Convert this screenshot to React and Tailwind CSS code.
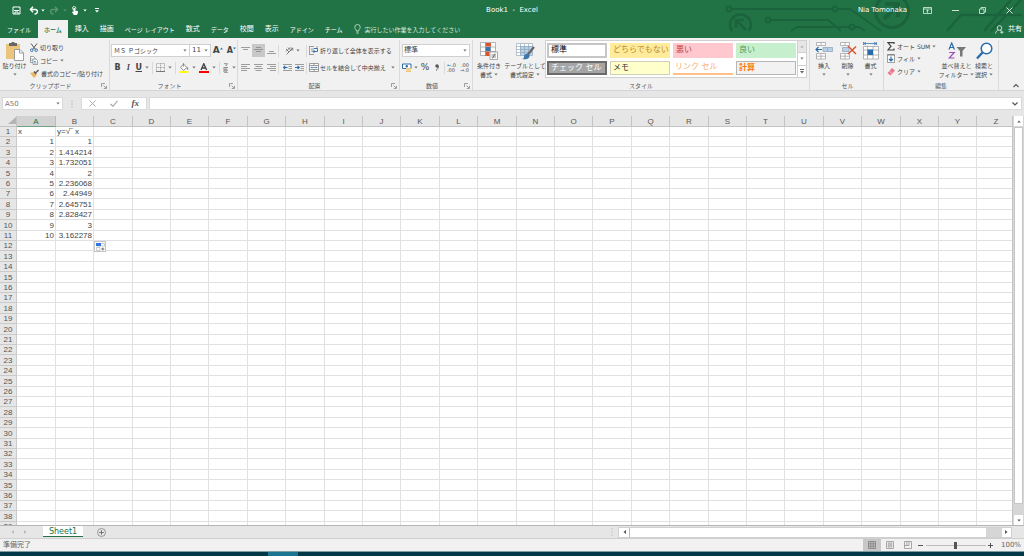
import React from 'react';

const JP = "font-['DejaVu_Sans','Noto_Sans_CJK_JP',sans-serif]";

function Caret({ className = 'fill-[#777]' }) {
  return (
    <svg viewBox="0 0 4 3" className={'h-[3px] w-1 shrink-0 ' + className} aria-hidden="true">
      <path d="M0.3 0.4h3.4L2 2.4z" />
    </svg>
  );
}

function Sep() {
  return <span className="h-3 w-px shrink-0 bg-[#dadada]" />;
}

function Svg({ w, h, className = '', children }) {
  return (
    <svg width={w} height={h} viewBox={`0 0 ${w} ${h}`} className={'shrink-0 ' + className} fill="none" aria-hidden="true">
      {children}
    </svg>
  );
}

function IconButton({ label, className = '', children }) {
  return (
    <button type="button" aria-label={label} className={'flex shrink-0 items-center justify-center ' + className}>
      {children}
    </button>
  );
}

function Group({ title, launcher, className = '', children }) {
  return (
    <section aria-label={title} className={'mt-0.5 flex shrink-0 flex-col border-r border-[#dadada] ' + className}>
      <div className="flex h-[42px] min-w-0">{children}</div>
      <div className="flex h-2 items-center text-[6px] leading-[8px] text-[#555]">
        <span className="flex-1 text-center">{title}</span>
        {launcher && (
          <IconButton label={title + 'の設定'} className="mr-0.5">
            <Svg w={6} h={6}>
              <path d="M0.5 4V0.5H4M2.5 2.5l2.5 2.5M5.5 2.8v2.7H2.8" stroke="#888" strokeWidth="0.8" />
            </Svg>
          </IconButton>
        )}
      </div>
    </section>
  );
}

function BigButton({ icon, lines, caret, className = '' }) {
  return (
    <button type="button" className={'flex shrink-0 flex-col items-center justify-start pt-px text-[6px] leading-[9px] ' + className}>
      <span className="flex h-5 items-center justify-center">{icon}</span>
      {lines.map((line, i) => (
        <span key={line} className="flex items-center gap-0.5 whitespace-nowrap">
          {line}
          {caret === 'inline' && i === lines.length - 1 && <Caret />}
        </span>
      ))}
      {caret === 'below' && <span className="flex h-[9px] items-center"><Caret /></span>}
    </button>
  );
}

function Header() {
  return (
    <header className="relative h-[38px] shrink-0 overflow-hidden bg-[#217346] text-white">
      <svg className="absolute top-0 right-0" width="304" height="38" viewBox="0 0 304 38" fill="none" stroke="#1b633c" strokeWidth="2" aria-hidden="true">
        <circle cx="9" cy="9" r="2.4" />
        <path d="M12 9h100M118 9h12l31 22M51 20h57l13 11M71 31l6-4h52M135 27h4l6 4" />
        <circle cx="115" cy="9" r="2.4" />
        <circle cx="48" cy="20" r="2.4" />
        <circle cx="132" cy="27" r="2.4" />
        <path d="M12 31a10.5 10.5 0 1 1 17 0" strokeWidth="2.6" />
        <path d="M26 30L17 21M16 28v-8h8" strokeWidth="2.6" />
        <circle cx="172" cy="11" r="16.5" strokeWidth="3" />
        <path d="M164 19l13-13M165 4h13v13" strokeWidth="4" />
        <path d="M227 31l14-16h61M264 31l27-31M271 31L301 0" strokeWidth="2.4" />
      </svg>

      <div className="relative flex h-5 items-center">
        <div className="flex w-1/3 items-center pl-3">
          <IconButton label="上書き保存">
            <Svg w={9} h={9}>
              <path d="M1 1h7v7H1z" stroke="#fff" />
              <path d="M2 4.5h5M3 8V6h3v2" stroke="#fff" />
            </Svg>
          </IconButton>
          <IconButton label="元に戻す" className="ml-2 gap-0.5">
            <Svg w={10} h={9}>
              <path d="M4 0.8L1.4 3.5 4 6.2M1.5 3.5h4.7C9.5 3.5 9 8 5.5 8" stroke="#fff" strokeWidth="1.4" />
            </Svg>
            <Caret className="fill-white" />
          </IconButton>
          <IconButton label="やり直し" className="ml-1 gap-1 opacity-25">
            <Svg w={10} h={9}>
              <path d="M6 0.8l2.6 2.7L6 6.2M8.5 3.5H3.8C0.5 3.5 1 8 4.5 8" stroke="#fff" strokeWidth="1.4" />
            </Svg>
            <Caret className="fill-white" />
          </IconButton>
          <IconButton label="タッチ/マウス モードの切り替え" className="ml-1 gap-1">
            <Svg w={8} h={9}>
              <circle cx="3.2" cy="2.2" r="1.7" stroke="#fff" strokeWidth="0.8" />
              <path d="M2.5 2h1.4v2.5l3 .6v2L6 9H2.8L1 6l.6-.6.9.6z" fill="#fff" />
            </Svg>
            <Caret className="fill-white" />
          </IconButton>
          <IconButton label="クイック アクセス ツール バーのユーザー設定" className="ml-2">
            <Svg w={4} h={5}>
              <path d="M0 0.5h4" stroke="#fff" />
              <path d="M0 2.2h4L2 4.5z" fill="#fff" />
            </Svg>
          </IconButton>
        </div>
        <h1 className="flex-1 text-center text-[7px] leading-[10px] whitespace-pre">Book1  -  Excel</h1>
        <div className="flex w-1/3 items-center justify-end pr-[11px]">
          <span className="text-[7px] leading-[10px]">Nia Tomonaka</span>
          <IconButton label="リボンの表示オプション" className="ml-4">
            <Svg w={9} h={7}>
              <path d="M0.5 0.5h8v6h-8zM0.5 2h8M4.5 5.8V3M3.2 4.3l1.3-1.3 1.3 1.3" stroke="#fff" strokeWidth="0.7" />
            </Svg>
          </IconButton>
          <IconButton label="最小化" className="ml-5">
            <Svg w={7} h={7}><path d="M0 3.5h7" stroke="#fff" strokeWidth="0.8" /></Svg>
          </IconButton>
          <IconButton label="元に戻す (縮小)" className="ml-5">
            <Svg w={7} h={7}><path d="M0.5 2h4.5v4.5H0.5zM2 2V0.5h4.5V5H5" stroke="#fff" strokeWidth="0.7" /></Svg>
          </IconButton>
          <IconButton label="閉じる" className="ml-5">
            <Svg w={7} h={7}><path d="M0.5 0.5l6 6M6.5 0.5l-6 6" stroke="#fff" strokeWidth="0.8" /></Svg>
          </IconButton>
        </div>
      </div>

      <nav className="relative flex h-[18px] items-center gap-[11px] pr-0.5 pl-[7px] text-[6px]">
        <button type="button" className="-mr-1 whitespace-nowrap">ファイル</button>
        <button type="button" className="-mr-1 h-[18px] bg-[#f1f1f1] px-1.5 font-medium text-[#217346]">ホーム</button>
        <button type="button" className="text-[7px]">挿入</button>
        <button type="button" className="text-[7px]">描画</button>
        <button type="button" className="whitespace-nowrap">ページ レイアウト</button>
        <button type="button" className="text-[7px]">数式</button>
        <button type="button">データ</button>
        <button type="button" className="text-[7px]">校閲</button>
        <button type="button" className="text-[7px]">表示</button>
        <button type="button">アドイン</button>
        <button type="button">チーム</button>
        <button type="button" className="flex items-center gap-1 whitespace-nowrap text-[#d5e6dc]">
          <Svg w={7} h={10}>
            <path d="M2.3 6.8C2.3 5.6 0.8 5 0.8 3.2a2.7 2.7 0 0 1 5.4 0c0 1.8-1.5 2.4-1.5 3.6zM2.3 8h2.4M2.6 9.3h1.8" stroke="#e6f0ea" strokeWidth="0.7" />
          </Svg>
          実行したい作業を入力してください
        </button>
        <button type="button" className="ml-auto flex items-center gap-1 text-[7px] whitespace-nowrap">
          <Svg w={9} h={9}>
            <circle cx="4.5" cy="3" r="2.3" stroke="#fff" strokeWidth="0.7" />
            <path d="M0.6 8.6C0.8 6.5 2 5.4 3.5 5M5 5l1.2.8M6.8 5.5v3.4M5.1 7.2h3.5" stroke="#fff" strokeWidth="0.7" />
          </Svg>
          共有
        </button>
      </nav>
    </header>
  );
}

function ClipboardGroup() {
  return (
    <Group title="クリップボード" launcher className="w-[110px]">
      <BigButton
        className="w-[29px]"
        lines={['貼り付け']}
        caret="below"
        icon={
          <Svg w={18} h={19}>
            <path d="M0 2h14v15H0z" fill="#ecc57c" />
            <path d="M3 1h2.5a1.5 1.5 0 0 1 3 0H11v3H3z" fill="#666" />
            <path d="M8.5 7.5h5.5l3.5 3.5v7.5h-9z" fill="#fff" stroke="#888" strokeWidth="0.8" />
            <path d="M13.5 7.5V11h4" stroke="#888" strokeWidth="0.8" />
          </Svg>
        }
      />
      <div className="flex flex-col pt-px pl-px text-[6px] leading-[9px]">
        <button type="button" className="flex h-[13px] items-center gap-0.5">
          <Svg w={8} h={9}>
            <path d="M1 0.5l4.5 6M7 0.5l-4.5 6" stroke="#555" />
            <circle cx="1.8" cy="7.2" r="1.3" stroke="#3a76b0" />
            <circle cx="6.2" cy="7.2" r="1.3" stroke="#3a76b0" />
          </Svg>
          切り取り
        </button>
        <button type="button" className="flex h-[13px] items-center gap-0.5">
          <Svg w={8} h={9}>
            <path d="M0.5 0.5h3l1.5 1.5v4.5H0.5z" fill="#fff" stroke="#777" strokeWidth="0.7" />
            <path d="M3 3h3l1.6 1.6v4H3z" fill="#fff" stroke="#777" strokeWidth="0.7" />
            <path d="M4 5.5h2M4 7h2.6M1.4 3h1.2M1.4 4.5h1.2" stroke="#3a76b0" strokeWidth="0.7" />
          </Svg>
          コピー<Caret />
        </button>
        <button type="button" className="flex h-[13px] items-center gap-0.5 whitespace-nowrap">
          <Svg w={9} h={9}>
            <path d="M0 4l4-1 3 3-3 3z" fill="#e9b867" />
            <path d="M4 2.5L6.2 5M6 3.5L8.6 1" stroke="#555" strokeWidth="1.4" />
          </Svg>
          書式のコピー/貼り付け
        </button>
      </div>
    </Group>
  );
}

function FontGroup() {
  return (
    <Group title="フォント" launcher className="w-32">
      <div className="flex w-full flex-col px-px pt-1">
        <div className="flex items-center">
          <label className="flex h-[13px] w-20 items-center border border-[#d0d0d0] bg-white pr-0.5">
            <select aria-label="フォント" className="w-full appearance-none pl-0.5 text-[6px] leading-[9px]"><option>ＭＳ Ｐゴシック</option></select>
            <Caret />
          </label>
          <label className="flex h-[13px] w-[21px] items-center border border-l-0 border-[#d0d0d0] bg-white pr-0.5">
            <select aria-label="フォント サイズ" className="w-full appearance-none pl-0.5 text-[7px] leading-[9px]"><option>11</option></select>
            <Caret />
          </label>
          <IconButton label="フォント サイズの拡大" className="ml-0.5 text-[9px] leading-[11px] font-bold">
            A<Svg w={3} h={8}><path d="M0 2.5L1.5 0.5 3 2.5z" fill="#3a76b0" /></Svg>
          </IconButton>
          <IconButton label="フォント サイズの縮小" className="ml-1 text-[8px] leading-[11px] font-bold">
            A<Svg w={3} h={8}><path d="M0 0.5h3L1.5 2.5z" fill="#3a76b0" /></Svg>
          </IconButton>
        </div>
        <div className="mt-1 flex h-[13px] items-center gap-[3px] pl-[3px] text-[8px] leading-[11px]">
          <button type="button" className="w-2 font-bold">B</button>
          <button type="button" className="w-2.5 font-['Liberation_Serif',serif] font-bold italic">I</button>
          <button type="button" className="flex items-center gap-[3px] font-bold underline">U<Caret /></button>
          <Sep />
          <IconButton label="罫線" className="gap-[3px]">
            <Svg w={9} h={9}><path d="M0.5 0.5h8v8h-8zM4.5 0.5v8M0.5 4.5h8" stroke="#888" strokeWidth="0.7" strokeDasharray="1 0.6" /><path d="M0 8.5h9" stroke="#777" /></Svg>
            <Caret />
          </IconButton>
          <Sep />
          <IconButton label="塗りつぶしの色" className="gap-[3px]">
            <Svg w={10} h={10}>
              <path d="M4.5 1L8 4.5 4.5 7.3 1.5 4.5z" fill="#fff" stroke="#777" strokeWidth="0.8" />
              <path d="M4.5 0v3.5" stroke="#777" strokeWidth="0.7" />
              <path d="M8 4c1.3 1 1.5 2 1 3-.8-.4-1-1.7-1-3z" fill="#3a76b0" />
              <path d="M0 8h9.5v2H0z" fill="#ffff00" />
            </Svg>
            <Caret />
          </IconButton>
          <IconButton label="フォントの色" className="gap-[3px]">
            <Svg w={10} h={10}><path d="M2 7L4.8 0.8 7.6 7M3 5h3.6" stroke="#444" strokeWidth="1.4" /><path d="M0 8h10v2H0z" fill="#ff0000" /></Svg>
            <Caret />
          </IconButton>
          <Sep />
          <IconButton label="ふりがなの表示/非表示" className="gap-[3px]">
            <Svg w={6} h={10}><path d="M1 0.7h3.5L3.2 2.5M3.200 2v1M0.500 4.500h4.500M3 4.500V9M1 7h4M1 9.300h4M1 5v4" stroke="#777" strokeWidth="0.8" /></Svg>
            <Caret />
          </IconButton>
        </div>
      </div>
    </Group>
  );
}

const linePaths = {
  top: 'M0 1.5h9M2 3.5h5',
  middle: 'M0 3.5h9M2 1.5h5M2 5.5h5',
  bottom: 'M0 7.5h9M2 5.5h5',
  left: 'M0 1.5h9M0 3.5h6M0 5.5h9M0 7.5h6',
  center: 'M0 1.5h9M1.5 3.5h6M0 5.5h9M1.5 7.5h6',
  right: 'M0 1.5h9M3 3.5h6M0 5.5h9M3 7.5h6',
};

function Lines({ kind }) {
  return <Svg w={9} h={9}><path d={linePaths[kind]} stroke="#888" strokeWidth="0.8" /></Svg>;
}

function AlignmentGroup() {
  return (
    <Group title="配置" launcher className="w-[162px]">
      <div className="flex w-full flex-col gap-1 pt-1 pl-px text-[6px] leading-[9px]">
        <div className="flex h-[13px] items-center">
          <IconButton label="上揃え" className="h-[13px] w-[13px]"><Lines kind="top" /></IconButton>
          <IconButton label="上下中央揃え" className="h-[13px] w-[13px] bg-[#c8c8c8]"><Lines kind="middle" /></IconButton>
          <IconButton label="下揃え" className="h-[13px] w-[13px]"><Lines kind="bottom" /></IconButton>
          <Sep />
          <IconButton label="方向" className="w-[27px] gap-0.5">
            <Svg w={9} h={9}><path d="M1 3l3 3M3 1.5l3.5 3.5M1 5.5L5 1.5M1.5 8.5l6-6M7.8 4.5V2.2H5.5" stroke="#666" strokeWidth="0.8" /></Svg>
            <Caret />
          </IconButton>
          <Sep />
          <button type="button" className="flex items-center gap-px pl-0.5 whitespace-nowrap">
            <Svg w={10} h={9}>
              <path d="M0.5 0v9M0.5 0.5H5M0.5 8.5H5M8 0v2M2 3h3M2 5h2" stroke="#888" strokeWidth="0.8" />
              <path d="M5 2.5h3.5v3H4M5.5 4L4 5.5 5.5 7" stroke="#3a76b0" />
            </Svg>
            折り返して全体を表示する
          </button>
        </div>
        <div className="flex h-[13px] items-center">
          <IconButton label="左揃え" className="h-3 w-[13px]"><Lines kind="left" /></IconButton>
          <IconButton label="中央揃え" className="h-3 w-[13px]"><Lines kind="center" /></IconButton>
          <IconButton label="右揃え" className="h-3 w-[13px]"><Lines kind="right" /></IconButton>
          <Sep />
          <IconButton label="インデントを減らす" className="ml-0.5 w-3">
            <Svg w={9} h={9}><path d="M0 1.5h9M5.5 3.5H9M5.5 5.5H9M0 7.5h9" stroke="#888" strokeWidth="0.8" /><path d="M4.5 4.5h-4M2.2 2.8L0.5 4.5l1.7 1.7" stroke="#2b6cab" strokeWidth="1.2" /></Svg>
          </IconButton>
          <IconButton label="インデントを増やす" className="mr-px w-3">
            <Svg w={9} h={9}><path d="M0 1.5h9M5.5 3.5H9M5.5 5.5H9M0 7.5h9" stroke="#888" strokeWidth="0.8" /><path d="M0 4.5h4M2.5 2.8l1.7 1.7-1.7 1.7" stroke="#2b6cab" strokeWidth="1.2" /></Svg>
          </IconButton>
          <Sep />
          <button type="button" className="flex items-center gap-px pl-0.5 whitespace-nowrap">
            <Svg w={10} h={9}>
              <path d="M0.5 0.5h9v8h-9zM0.5 2.5h9M0.5 6.5h9M5 0.5v2M5 6.5v2" fill="#fff" stroke="#777" strokeWidth="0.7" />
              <path d="M2 4.5h6M3 3.5l-1 1 1 1M7 3.5l1 1-1 1" stroke="#3a76b0" strokeWidth="0.7" />
            </Svg>
            セルを結合して中央揃え
            <span className="pl-1"><Caret /></span>
          </button>
        </div>
      </div>
    </Group>
  );
}

function NumberGroup() {
  return (
    <Group title="数値" launcher className="w-[73px]">
      <div className="flex w-full flex-col gap-1 px-0.5 pt-1">
        <label className="flex h-[13px] items-center border border-[#d0d0d0] bg-white pr-0.5">
          <select aria-label="表示形式" className="w-full appearance-none pl-px text-[7px] leading-[9px]"><option>標準</option></select>
          <Caret />
        </label>
        <div className="flex h-[13px] items-center text-[9px] leading-[11px]">
          <IconButton label="通貨表示形式" className="gap-0.5">
            <Svg w={10} h={10}>
              <path d="M0.5 1h8.5v4.5H0.5z" fill="#fff" stroke="#2b6cab" />
              <circle cx="4.8" cy="3.2" r="1.2" fill="#2b6cab" />
              <path d="M4 5h5v4H4z" fill="#ecc57c" /><path d="M4 7h5" stroke="#fff" strokeWidth="0.6" />
            </Svg>
            <Caret />
          </IconButton>
          <button type="button" className="ml-0.5 w-2.5">%</button>
          <button type="button" aria-label="桁区切りスタイル" className="flex w-3.5 justify-center">
            <Svg w={4} h={7}><circle cx="2" cy="2" r="1.7" fill="#555" /><path d="M3.3 2c.2 2-.8 3.5-2.3 4.5" stroke="#555" strokeWidth="0.9" /></Svg>
          </button>
          <Sep />
          <button type="button" className="ml-0.5 text-left text-[5px] leading-[5px]"><span className="text-[#2b6cab]">←</span>.0<br />.00</button>
          <button type="button" className="ml-1 text-right text-[5px] leading-[5px]">.00<br /><span className="text-[#2b6cab]">→</span>.0</button>
        </div>
      </div>
    </Group>
  );
}

const cellStyles = [
  ['標準', 'border-2 border-[#c6c6c6] bg-white text-black'],
  ['どちらでもない', 'border border-[#ffeb9c] bg-[#ffeb9c] text-[#b98a2b]'],
  ['悪い', 'border border-[#ffc7ce] bg-[#ffc7ce] text-[#b8404e]'],
  ['良い', 'border border-[#c6efce] bg-[#c6efce] text-[#4a9a58]'],
  ['チェック セル', 'border-2 border-double border-[#6b6b6b] bg-[#a5a5a5] text-white'],
  ['メモ', 'border border-[#d0d0b8] bg-[#ffffcc] text-[#333]'],
  ['リンク セル', 'border-b-2 border-[#ffc089] bg-white text-[#fbae70]'],
  ['計算', 'border border-[#b5b5b5] bg-[#f2f2f2] font-bold text-[#fa7d00]'],
];

function StylesGroup() {
  return (
    <Group title="スタイル" className="min-w-[337px] flex-1">
      <BigButton
        className="w-8"
        lines={['条件付き', '書式']}
        caret="inline"
        icon={
          <Svg w={18} h={18}>
            <path d="M0.5 0.5h15v13h-15zM0.5 5h15M0.5 9.5h15M5.5 0.5v13M10.5 0.5v13" fill="#fff" stroke="#999" strokeWidth="0.7" />
            <path d="M5.5 1H11v3.5H5.5zM5.5 9.5h4V14h-4z" fill="#d6572f" />
            <path d="M5.5 5h5v4h-5z" fill="#3a76b0" />
            <path d="M10 10h7.5v7.5H10z" fill="#fff" stroke="#888" strokeWidth="0.7" />
            <path d="M11.5 13h4.5M11.5 15h4.5M15 11.5L12.5 16.5" stroke="#555" strokeWidth="0.7" />
          </Svg>
        }
      />
      <BigButton
        className="w-10"
        lines={['テーブルとして', '書式設定']}
        caret="inline"
        icon={
          <Svg w={19} h={18}>
            <path d="M0.5 1.5h16v12h-16z" fill="#fff" />
            <path d="M4 4h12.5v9.5H4z" fill="#b8d2ea" />
            <path d="M0.5 1.5h16v12h-16zM0.5 4.5h16M0.5 7.5h16M0.5 10.5h16M4.5 1.5v12M8.5 1.5v12M12.5 1.5v12" stroke="#8aa0b4" strokeWidth="0.6" />
            <path d="M18 5l-6.5 8" stroke="#666" strokeWidth="2.2" />
            <path d="M12 12c-2-1-4 1-4 3 0 1-1 2-2 2 4 1 8 0 7.5-4z" fill="#3a76b0" />
          </Svg>
        }
      />
      <div className="mr-0.5 flex h-[38px] min-w-0 flex-1 border border-[#d0d0d0] bg-white">
        <div className="grid min-w-0 flex-1 grid-cols-4 grid-rows-2 gap-[3px] px-px py-0.5">
          {cellStyles.map(([name, look]) => (
            <button key={name} type="button" className={'min-w-0 pl-0.5 text-left text-[8px] leading-[10px] whitespace-nowrap ' + look}>{name}</button>
          ))}
        </div>
        <div className="flex w-[9px] flex-col border-l border-[#d0d0d0]">
          <IconButton label="上へ" className="flex-1 bg-[#e6e6e6]"><Caret className="rotate-180 fill-[#aaa]" /></IconButton>
          <IconButton label="下へ" className="flex-1 border-y border-[#d0d0d0]"><Caret /></IconButton>
          <IconButton label="その他" className="flex-1"><Svg w={4} h={5}><path d="M0 0.5h4" stroke="#666" /><path d="M0 2h4L2 4.5z" fill="#666" /></Svg></IconButton>
        </div>
      </div>
    </Group>
  );
}

function CellsGroup() {
  return (
    <Group title="セル" className="w-[74px] pl-0.5">
      <BigButton className="w-6" lines={['挿入']} caret="below" icon={
        <Svg w={18} h={18}>
          <path d="M1.5 0.5h9v3h-9zM6 0.5v3M1.5 11.5h9v5.5h-9zM6 11.5V17M1.5 14.2h9" fill="#fff" stroke="#999" strokeWidth="0.7" />
          <path d="M8 5.5h9.5v4H8zM12.5 5.5v4" fill="#b8cfe6" stroke="#8aa0b4" strokeWidth="0.7" />
          <path d="M7 7.5H1M3.5 5L1 7.5 3.5 10" stroke="#2b6cab" strokeWidth="1.2" />
        </Svg>} />
      <BigButton className="w-[23px]" lines={['削除']} caret="below" icon={
        <Svg w={18} h={18}>
          <path d="M1.5 0.5h9v3h-9zM6 0.5v3M1.5 11.5h9v5.5h-9zM6 11.5V17M1.5 14.2h9" fill="#fff" stroke="#999" strokeWidth="0.7" />
          <path d="M3.5 5.5H10v4H3.5z" fill="#b8cfe6" stroke="#8aa0b4" strokeWidth="0.7" />
          <path d="M9 4l8 8M17 4.5L9 12" stroke="#d6572f" strokeWidth="1.5" />
        </Svg>} />
      <BigButton className="w-[23px]" lines={['書式']} caret="below" icon={
        <Svg w={17} h={18}>
          <path d="M1.5 4.5h15v12.500h-15zM1.5 8h15M1.5 13h15M5.5 4.5V17M11 4.5V17" fill="#fff" stroke="#999" strokeWidth="0.7" />
          <path d="M5.5 7.5H11V13H5.5z" fill="#2b6cab" />
          <path d="M2 1.5h12M4 0L2 1.5 4 3M12 0l2 1.5L12 3M1.5 0v3M14.5 0v3" stroke="#3a76b0" strokeWidth="0.8" />
        </Svg>} />
    </Group>
  );
}

function EditGroup() {
  return (
    <Group title="編集" className="w-[115px]">
      <div className="flex w-[57px] flex-col pl-[3px] text-[6px] leading-[9px]">
        <button type="button" className="flex h-3 items-center gap-0.5 whitespace-nowrap">
          <Svg w={8} h={9}><path d="M7 2V0.7H1L4 4.2 1 8h6V6.5" stroke="#444" strokeWidth="1.2" /></Svg>
          オート SUM<Caret />
        </button>
        <button type="button" className="flex h-[13px] items-center gap-0.5">
          <Svg w={8} h={9}><path d="M0.5 0.5h7v8h-7z" fill="#fff" stroke="#777" strokeWidth="0.7" /><path d="M0.5 1h7" stroke="#777" /><path d="M4 2.5V7M2 5l2 2 2-2" stroke="#2b6cab" strokeWidth="1.2" /></Svg>
          フィル<Caret />
        </button>
        <button type="button" className="flex h-3 items-center gap-0.5">
          <Svg w={8} h={9}><path d="M5 1l3 2.5-4.5 5L0.5 6z" fill="#e8788a" /><path d="M2.2 4l3 2.6" stroke="#fff" strokeWidth="0.5" /></Svg>
          クリア<Caret />
        </button>
      </div>
      <BigButton className="w-[31px]" lines={['並べ替えと', 'フィルター']} caret="inline" icon={
        <Svg w={18} h={18}>
          <path d="M1 7.5L3.7 1l2.7 6.5M2 5.5h3.5" stroke="#2b6cab" strokeWidth="1.2" />
          <path d="M1.2 10.5h5L1.2 16h5.2" stroke="#9a4fb8" strokeWidth="1.2" />
          <path d="M8.5 5H18l-3.5 4v5.5h-2.5V9z" fill="#777" />
        </Svg>} />
      <BigButton className="w-6" lines={['検索と', '選択']} caret="inline" icon={
        <Svg w={17} h={18}><circle cx="10.5" cy="6.5" r="5.3" fill="#fff" stroke="#2b6cab" strokeWidth="1.5" /><path d="M6.5 10.5L1 16.5" stroke="#2b6cab" strokeWidth="2.4" /></Svg>} />
    </Group>
  );
}

function Ribbon() {
  return (
    <div className="flex h-[53px] shrink-0 border-b border-[#d5d5d5] bg-[#f1f1f1] text-[#444]">
      <ClipboardGroup />
      <FontGroup />
      <AlignmentGroup />
      <NumberGroup />
      <StylesGroup />
      <CellsGroup />
      <EditGroup />
      <div className="flex w-[26px] shrink-0 items-end justify-end pr-1.5 pb-0.5">
        <IconButton label="リボンを折りたたむ"><Svg w={6} h={5}><path d="M0.5 4L3 1.5 5.5 4" stroke="#555" strokeWidth="1.1" /></Svg></IconButton>
      </div>
    </div>
  );
}

function FormulaBar() {
  return (
    <div className="flex h-[25px] shrink-0 items-center bg-[#e6e6e6] px-0.5 text-[7px]">
      <label className="flex h-[13px] w-[61px] items-center border border-[#dadada] bg-white pr-0.5">
        <input aria-label="名前ボックス" defaultValue="A50" className="w-full min-w-0 pl-0.5 leading-[10px] text-[#777]" />
        <Caret />
      </label>
      <Svg w={2} h={8} className="mx-2"><path d="M0.5 1h1M0.5 4h1M0.5 7h1" stroke="#999" /></Svg>
      <div className="flex h-[13px] w-[66px] items-center justify-around border border-[#dadada] bg-white">
        <IconButton label="キャンセル"><Svg w={7} h={7}><path d="M0.5 0.5l6 6M6.5 0.5l-6 6" stroke="#aaa" /></Svg></IconButton>
        <IconButton label="入力"><Svg w={8} h={7}><path d="M0.5 4L3 6.3 7.5 0.8" stroke="#aaa" strokeWidth="1.2" /></Svg></IconButton>
        <button type="button" aria-label="関数の挿入" className="font-['Liberation_Serif',serif] text-[9px] leading-[11px] font-bold text-[#555] italic">fx</button>
      </div>
      <label className="ml-0.5 flex h-[13px] flex-1 items-center border border-[#dadada] bg-white pr-[3px]">
        <input aria-label="数式バー" className="w-full min-w-0 leading-[10px]" />
        <Svg w={6} h={4}><path d="M0.5 0.5L3 3 5.5 0.5" stroke="#555" strokeWidth="1.2" /></Svg>
      </label>
    </div>
  );
}

const columns = 'ABCDEFGHIJKLMNOPQRSTUVWXYZ'.split('');
const columnWidths = ['w-[39px]', 'w-[38px]', 'w-[39px]', 'w-[38px]', 'w-[38px]'];
const rowHeights = ['h-[10px]', 'h-[10px]', 'h-[11px]', 'h-[10px]', 'h-[11px]'];
const data = {
  A1: 'x', B1: 'y=√‾ x',
  A2: '1', B2: '1',
  A3: '2', B3: '1.414214',
  A4: '3', B4: '1.732051',
  A5: '4', B5: '2',
  A6: '5', B6: '2.236068',
  A7: '6', B7: '2.44949',
  A8: '7', B8: '2.645751',
  A9: '8', B9: '2.828427',
  A10: '9', B10: '3',
  A11: '10', B11: '3.162278',
};

function Grid() {
  return (
    <main className="flex min-h-0 flex-1 overflow-hidden border-b border-[#b5b5b5] bg-[#e6e6e6]">
      <div className="min-w-0 flex-1 overflow-hidden">
        <table className="w-[1016px] table-fixed border-separate border-spacing-0 font-['Liberation_Sans',sans-serif] text-[8px] leading-[9px] text-[#444]">
          <colgroup>
            <col className="w-[17px]" />
            {columns.map((c, i) => <col key={c} className={columnWidths[i % 5]} />)}
          </colgroup>
          <thead>
            <tr className="h-[11px]">
              <th className="border-r border-b border-[#c4c4c4] p-0">
                <Svg w={8} h={8} className="ml-auto"><path d="M8 0v7H0z" fill="#b4b4b4" /></Svg>
              </th>
              {columns.map((c) => (
                <th key={c} scope="col" className={'border-r border-b p-0 font-normal ' + (c === 'A' ? 'border-r-[#bbb] border-b-[#6fa585] bg-[#d2d2d2] text-[#217346]' : 'border-[#c4c4c4] text-[#555]')}>{c}</th>
              ))}
            </tr>
          </thead>
          <tbody>
            {Array.from({ length: 39 }, (_, i) => i + 1).map((n) => (
              <tr key={n} className={rowHeights[(n - 1) % 5]}>
                <th scope="row" className="border-r border-b border-[#cacaca] bg-[#e6e6e6] p-0 text-center font-normal text-[#555]">{n}</th>
                {columns.map((c) => (
                  <td key={c} className={'relative border-r border-b border-[#e1e1e1] bg-white px-px py-0 whitespace-nowrap ' + (n === 1 ? 'text-left' : 'text-right')}>
                    {data[c + n]}
                    {c === 'C' && n === 12 && (
                      <button type="button" aria-label="オートフィル オプション" className="absolute top-0 left-0 z-10 flex h-[11px] w-3 items-center justify-center border border-[#c4c4c4] bg-white">
                        <Svg w={9} h={8}>
                          <path d="M0.5 0.5h8v2.5h-8zM0.5 4.5h3.5v3H0.5z" stroke="#aaa" strokeWidth="0.6" />
                          <path d="M0 0h5v3H0z" fill="#2f74e0" />
                          <path d="M6.8 4.5v3M5.3 6h3" stroke="#555" strokeWidth="0.8" />
                        </Svg>
                      </button>
                    )}
                  </td>
                ))}
              </tr>
            ))}
          </tbody>
        </table>
      </div>
      <div className="flex w-3 shrink-0 flex-col border-l border-[#c4c4c4] bg-[#d6d6d6] px-px">
        <IconButton label="上にスクロール" className="h-2.5 bg-white"><Caret className="rotate-180 fill-[#555]" /></IconButton>
        <div className="mt-px mb-[11px] flex-1 border border-[#c6c6c6] bg-white" />
        <IconButton label="下にスクロール" className="h-2.5 bg-white"><Caret className="fill-[#555]" /></IconButton>
      </div>
    </main>
  );
}

function SheetBar() {
  return (
    <div className="flex h-3 shrink-0 items-stretch bg-[#e6e6e6]">
      <div className="flex w-[43px] items-center gap-2.5 pl-[11px]">
        <IconButton label="前のシート"><Svg w={3} h={4}><path d="M3 0v4L0.5 2z" fill="#bbb" /></Svg></IconButton>
        <IconButton label="次のシート"><Svg w={3} h={4}><path d="M0 0v4L2.5 2z" fill="#bbb" /></Svg></IconButton>
      </div>
      <button type="button" className="h-[11px] w-10 border-b border-[#217346] bg-white text-[8px] leading-[9px] text-[#217346]">Sheet1</button>
      <IconButton label="新しいシート" className="ml-3.5">
        <Svg w={9} h={9}><circle cx="4.5" cy="4.5" r="4" stroke="#777" strokeWidth="0.7" /><path d="M4.5 2.2v4.6M2.2 4.5h4.6" stroke="#666" strokeWidth="0.9" /></Svg>
      </IconButton>
      <div className="ml-auto flex w-[41%] items-center pr-3">
        <Svg w={2} h={8} className="mr-[5px] ml-[7px]"><path d="M0.5 1h1M0.5 4h1M0.5 7h1" stroke="#aaa" /></Svg>
        <div className="flex h-[11px] flex-1 border border-[#d0d0d0] bg-[#d6d6d6]">
          <IconButton label="左にスクロール" className="w-2.5 bg-white"><Svg w={3} h={4}><path d="M3 0v4L0.5 2z" fill="#555" /></Svg></IconButton>
          <div className="mr-4 flex-1 border-l border-[#bbb] bg-white" />
          <IconButton label="右にスクロール" className="w-[9px] bg-white"><Svg w={3} h={4}><path d="M0 0v4L2.5 2z" fill="#555" /></Svg></IconButton>
        </div>
      </div>
    </div>
  );
}

function StatusBar() {
  return (
    <footer className="flex h-[13px] shrink-0 items-center border-t border-[#cfcfcf] bg-[#f1f1f1] px-[3px] text-[7px] leading-[10px] text-[#666]">
      <span>準備完了</span>
      <div className="ml-auto flex items-center">
        <IconButton label="標準" className="h-3 w-[18px] bg-[#c8c8c8]"><Svg w={8} h={8}><path d="M0.5 0.5h7v7h-7zM0.5 2.8h7M0.5 5.2h7M2.8 0.5v7M5.2 0.5v7" stroke="#777" strokeWidth="0.7" /></Svg></IconButton>
        <IconButton label="ページ レイアウト" className="h-3 w-[18px]"><Svg w={8} h={8}><path d="M0.5 0.5h7v7h-7zM2.3 2h3.4v4H2.3zM3.2 3.3h1.6M3.2 4.6h1.6" stroke="#888" strokeWidth="0.7" /></Svg></IconButton>
        <IconButton label="改ページ プレビュー" className="h-3 w-[18px]"><Svg w={8} h={8}><path d="M0.5 0.5h7v7h-7zM0.5 4.5h4.5v-4M2.8 0.5v4" stroke="#888" strokeWidth="0.7" /></Svg></IconButton>
        <IconButton label="縮小" className="w-2"><Svg w={5} h={5}><path d="M0 2.5h5" stroke="#555" /></Svg></IconButton>
        <input
          type="range"
          aria-label="ズーム"
          min="0"
          max="100"
          defaultValue="50"
          className="mx-px h-2 w-[60px] appearance-none bg-transparent [&::-webkit-slider-runnable-track]:h-px [&::-webkit-slider-runnable-track]:bg-[#bdbdbd] [&::-webkit-slider-thumb]:-mt-[3px] [&::-webkit-slider-thumb]:h-[7px] [&::-webkit-slider-thumb]:w-[3px] [&::-webkit-slider-thumb]:appearance-none [&::-webkit-slider-thumb]:bg-[#555]"
        />
        <IconButton label="拡大" className="w-2"><Svg w={5} h={5}><path d="M0 2.5h5M2.5 0v5" stroke="#555" /></Svg></IconButton>
        <span className="ml-1.5">100%</span>
      </div>
    </footer>
  );
}

export default function App() {
  return (
    <div className={'flex h-screen flex-col overflow-hidden bg-[#e6e6e6] ' + JP}>
      <Header />
      <Ribbon />
      <FormulaBar />
      <Grid />
      <SheetBar />
      <StatusBar />
      <div className="flex h-[5px] shrink-0 border-t border-[#7f9ca1] bg-[#003847]">
        <div className="ml-[268px] w-[30px] bg-[#1a7590]" />
      </div>
    </div>
  );
}
